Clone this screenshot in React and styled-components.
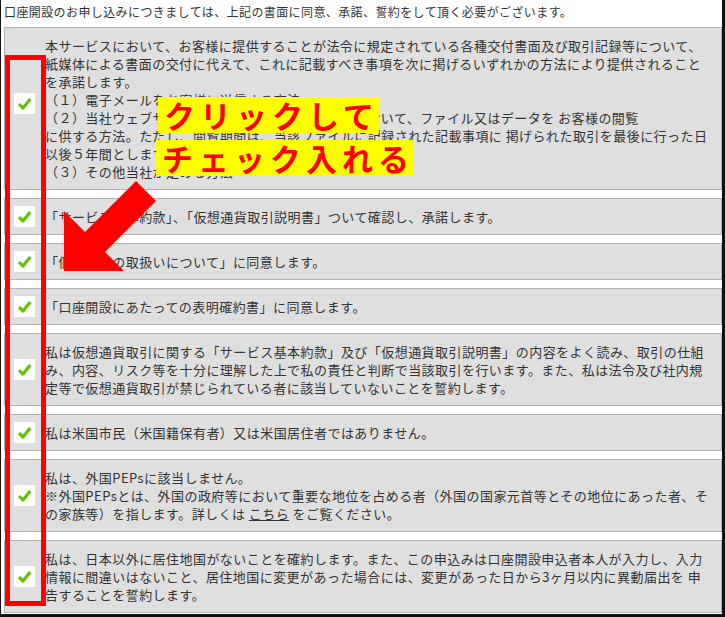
import React from 'react';
import styled, { createGlobalStyle } from 'styled-components';

const GlobalStyle = createGlobalStyle`
    html, body {
        margin: 0;
        padding: 0;
        background: #fff;
    }
    * {
        box-sizing: border-box;
    }
`;

const Page = styled.div`
    position: relative;
    width: 725px;
    height: 617px;
    overflow: hidden;
    background: #fff;
    border-left: 1px solid #111;
    border-right: 3px solid #111;
    border-bottom: 3px solid #111;
    padding: 3px 0 0 3px;
    font-family: "Noto Sans CJK JP", "Noto Sans", sans-serif;
    color: #333;
`;

const Lead = styled.p`
    margin: 0 0 6px;
    font-size: 12px;
    line-height: 18px;
    letter-spacing: 0.4px;
    white-space: nowrap;
`;

const List = styled.div`
    display: flex;
    flex-direction: column;
    gap: 8px;
    width: 718px;
`;

const Row = styled.label`
    display: flex;
    align-items: center;
    background: #dfdfdf;
    border: 1px solid #b3b3b3;
    padding: 9px 0 8px 9px;
`;

// the box is taller than one text line: negative margins keep it out of the row height
const CheckBox = styled.span`
    flex: 0 0 21px;
    width: 21px;
    height: 21px;
    margin: -3px 10px -3px 0;
    background: #fff;
    display: flex;
    align-items: center;
    justify-content: center;
    transform: translateY(${(p) => p.lift || -1}px);
`;

const Text = styled.div`
    font-size: 13px;
    line-height: 18px;
    letter-spacing: 0.45px;
    white-space: nowrap;
`;

const Link = styled.a`
    color: #333;
    text-decoration: underline;
`;

const RedFrame = styled.div`
    position: absolute;
    left: 4px;
    top: 55px;
    width: 41px;
    height: 551px;
    border: 5px solid #ff0000;
`;

const Callout = styled.div`
    position: absolute;
    left: ${(p) => p.x}px;
    top: ${(p) => p.y}px;
    background: #ffff00;
    color: #ff0000;
    font-family: "Noto Sans CJK JP", sans-serif;
    font-weight: 700;
    font-size: 31px;
    line-height: 36px;
    letter-spacing: 5px;
    padding: 0 0 0 6px;
    white-space: nowrap;
`;

const Arrow = styled.svg`
    position: absolute;
    left: 58px;
    top: 176px;
`;

function Check() {
    return (
        <svg width="15" height="13" viewBox="0 0 15 13">
            <path d="M2 7.2 L6 11 L13.3 2" fill="none" stroke="#63c400" strokeWidth="3.2" strokeLinejoin="round" />
        </svg>
    );
}

const items = [
    {
        key: 'delivery',
        lift: -6,
        lines: [
            '本サービスにおいて、お客様に提供することが法令に規定されている各種交付書面及び取引記録等について、',
            '紙媒体による書面の交付に代えて、これに記載すべき事項を次に掲げるいずれかの方法により提供されること',
            'を承諾します。',
            '（１）電子メールをお客様に送信する方法',
            '（２）当社ウェブサイト上の電子交付閲覧システムにおいて、ファイル又はデータを お客様の閲覧',
            'に供する方法。ただし、閲覧期間は、当該ファイルに記録された記載事項に 掲げられた取引を最後に行った日',
            '以後５年間とします。',
            '（３）その他当社が定める方法',
        ],
    },
    { key: 'terms', lines: ['「サービス基本約款」、「仮想通貨取引説明書」ついて確認し、承諾します。'] },
    { key: 'privacy', lines: ['「個人情報の取扱いについて」に同意します。'] },
    { key: 'pledge', lines: ['「口座開設にあたっての表明確約書」に同意します。'] },
    {
        key: 'risk',
        lines: [
            '私は仮想通貨取引に関する「サービス基本約款」及び「仮想通貨取引説明書」の内容をよく読み、取引の仕組',
            'み、内容、リスク等を十分に理解した上で私の責任と判断で当該取引を行います。また、私は法令及び社内規',
            '定等で仮想通貨取引が禁じられている者に該当していないことを誓約します。',
        ],
    },
    { key: 'us', lines: ['私は米国市民（米国籍保有者）又は米国居住者ではありません。'] },
    {
        key: 'peps',
        lines: [
            '私は、外国PEPsに該当しません。',
            '※外国PEPsとは、外国の政府等において重要な地位を占める者（外国の国家元首等とその地位にあった者、そ',
            <>の家族等）を指します。詳しくは <Link href="#peps">こちら</Link> をご覧ください。</>,
        ],
    },
    {
        key: 'residence',
        lines: [
            '私は、日本以外に居住地国がないことを確約します。また、この申込みは口座開設申込者本人が入力し、入力',
            '情報に間違いはないこと、居住地国に変更があった場合には、変更があった日から3ヶ月以内に異動届出を 申',
            '告することを誓約します。',
        ],
    },
];

export default function App() {
    return (
        <Page>
            <GlobalStyle />
            <Lead>口座開設のお申し込みにつきましては、上記の書面に同意、承諾、誓約をして頂く必要がございます。</Lead>
            <List>
                {items.map((item) => (
                    <Row key={item.key}>
                        <CheckBox lift={item.lift}>
                            <Check />
                        </CheckBox>
                        <Text>
                            {item.lines.map((line, i) => (
                                <div key={i}>{line}</div>
                            ))}
                        </Text>
                    </Row>
                ))}
            </List>

            {/* annotations */}
            <RedFrame />
            <Callout x={157} y={97}>クリックして</Callout>
            <Callout x={155} y={140}>チェック入れる</Callout>
            <Arrow width="105" height="100" viewBox="0 0 105 100">
                <polygon points="5,95 5,35 26,56 77,5 97,25 46,76 65,95" fill="#ff0000" />
            </Arrow>
        </Page>
    );
}
